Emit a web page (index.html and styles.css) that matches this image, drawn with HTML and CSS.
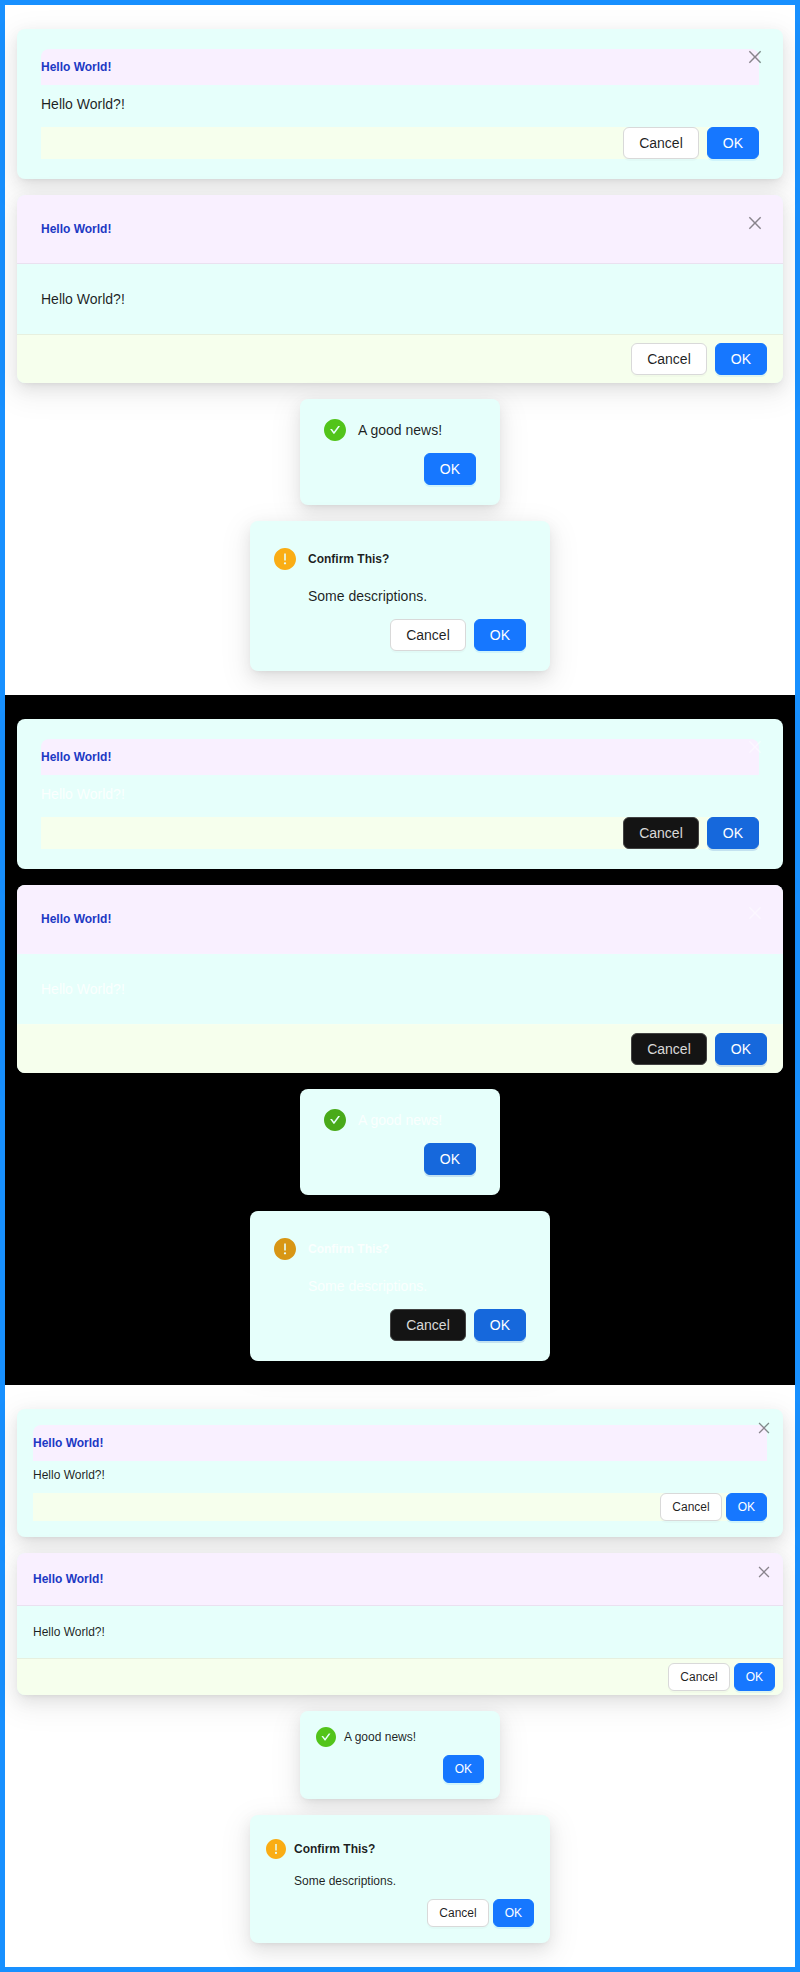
FILE: index.html
```html
<!DOCTYPE html>
<html lang="en">
<head>
<meta charset="utf-8">
<title>Modals</title>
<link rel="stylesheet" href="styles.css">
</head>
<body>
<svg class="sprite" aria-hidden="true">
  <symbol id="close" viewBox="64 64 896 896"><path fill-rule="evenodd" d="M799.86 166.31c.02 0 .04.02.08.06l57.69 57.7c.04.03.05.05.06.08a.12.12 0 010 .06c0 .03-.02.05-.06.09L569.93 512l287.7 287.7c.04.04.05.06.06.09a.12.12 0 010 .07c0 .02-.02.04-.06.08l-57.7 57.69c-.03.04-.05.05-.07.06a.12.12 0 01-.07 0c-.03 0-.05-.02-.09-.06L512 569.93l-287.7 287.7c-.04.04-.06.05-.09.06a.12.12 0 01-.07 0c-.02 0-.04-.02-.08-.06l-57.69-57.7c-.04-.03-.05-.05-.06-.07a.12.12 0 010-.07c0-.03.02-.05.06-.09L454.07 512l-287.7-287.7c-.04-.04-.05-.06-.06-.09a.12.12 0 010-.07c0-.02.02-.04.06-.08l57.7-57.69c.03-.04.05-.05.07-.06a.12.12 0 01.07 0c.03 0 .05.02.09.06L512 454.07l287.7-287.7c.04-.04.06-.05.09-.06a.12.12 0 01.07 0z"/></symbol>
  <symbol id="check" viewBox="64 64 896 896"><path d="M512 64C264.6 64 64 264.6 64 512s200.6 448 448 448 448-200.6 448-448S759.4 64 512 64zm193.5 301.7l-210.6 292a31.8 31.8 0 01-51.7 0L318.5 484.9c-3.8-5.3 0-12.7 6.5-12.7h46.9c10.2 0 19.9 4.9 25.9 13.3l71.2 98.8 157.2-218c6-8.3 15.6-13.3 25.9-13.3H699c6.5 0 10.3 7.4 6.5 12.7z"/></symbol>
  <symbol id="warn" viewBox="64 64 896 896"><path d="M512 64C264.6 64 64 264.6 64 512s200.6 448 448 448 448-200.6 448-448S759.4 64 512 64zm-32 232c0-4.4 3.6-8 8-8h48c4.4 0 8 3.6 8 8v272c0 4.4-3.6 8-8 8h-48c-4.4 0-8-3.6-8-8V296zm32 440a48.01 48.01 0 010-96 48.01 48.01 0 010 96z"/></symbol>
</svg>
<main class="frame">
  <section class="theme">
    <div class="modal">
      <span class="close"><svg><use href="#close"/></svg></span>
      <header class="head"><h5 class="title">Hello World!</h5></header>
      <div class="body">Hello World?!</div>
      <footer class="foot"><button class="btn">Cancel</button><button class="btn primary">OK</button></footer>
    </div>
    <div class="modal divided">
      <span class="close"><svg><use href="#close"/></svg></span>
      <header class="head"><h5 class="title">Hello World!</h5></header>
      <div class="body">Hello World?!</div>
      <footer class="foot"><button class="btn">Cancel</button><button class="btn primary">OK</button></footer>
    </div>
    <div class="modal news">
      <div class="message"><svg class="icon success"><use href="#check"/></svg><div>A good news!</div></div>
      <footer class="actions"><button class="btn primary">OK</button></footer>
    </div>
    <div class="modal confirm">
      <div class="message">
        <svg class="icon warning"><use href="#warn"/></svg>
        <div class="text"><h5 class="title">Confirm This?</h5><div>Some descriptions.</div></div>
      </div>
      <footer class="actions"><button class="btn">Cancel</button><button class="btn primary">OK</button></footer>
    </div>
  </section>

  <section class="theme dark">
    <div class="modal">
      <span class="close"><svg><use href="#close"/></svg></span>
      <header class="head"><h5 class="title">Hello World!</h5></header>
      <div class="body">Hello World?!</div>
      <footer class="foot"><button class="btn">Cancel</button><button class="btn primary">OK</button></footer>
    </div>
    <div class="modal divided">
      <span class="close"><svg><use href="#close"/></svg></span>
      <header class="head"><h5 class="title">Hello World!</h5></header>
      <div class="body">Hello World?!</div>
      <footer class="foot"><button class="btn">Cancel</button><button class="btn primary">OK</button></footer>
    </div>
    <div class="modal news">
      <div class="message"><svg class="icon success"><use href="#check"/></svg><div>A good news!</div></div>
      <footer class="actions"><button class="btn primary">OK</button></footer>
    </div>
    <div class="modal confirm">
      <div class="message">
        <svg class="icon warning"><use href="#warn"/></svg>
        <div class="text"><h5 class="title">Confirm This?</h5><div>Some descriptions.</div></div>
      </div>
      <footer class="actions"><button class="btn">Cancel</button><button class="btn primary">OK</button></footer>
    </div>
  </section>

  <section class="theme compact">
    <div class="modal">
      <span class="close"><svg><use href="#close"/></svg></span>
      <header class="head"><h5 class="title">Hello World!</h5></header>
      <div class="body">Hello World?!</div>
      <footer class="foot"><button class="btn">Cancel</button><button class="btn primary">OK</button></footer>
    </div>
    <div class="modal divided">
      <span class="close"><svg><use href="#close"/></svg></span>
      <header class="head"><h5 class="title">Hello World!</h5></header>
      <div class="body">Hello World?!</div>
      <footer class="foot"><button class="btn">Cancel</button><button class="btn primary">OK</button></footer>
    </div>
    <div class="modal news">
      <div class="message"><svg class="icon success"><use href="#check"/></svg><div>A good news!</div></div>
      <footer class="actions"><button class="btn primary">OK</button></footer>
    </div>
    <div class="modal confirm">
      <div class="message">
        <svg class="icon warning"><use href="#warn"/></svg>
        <div class="text"><h5 class="title">Confirm This?</h5><div>Some descriptions.</div></div>
      </div>
      <footer class="actions"><button class="btn">Cancel</button><button class="btn primary">OK</button></footer>
    </div>
  </section>
</main>
</body>
</html>
```

FILE: styles.css
```css
* { box-sizing: border-box; }
body { margin: 0; font-family: "Liberation Sans", Arial, sans-serif; }
.sprite { display: none; }
.frame { border: 5px solid #1890ff; }

.theme {
  --text: rgba(0, 0, 0, .88);
  --muted: rgba(0, 0, 0, .45);
  --line: rgba(5, 5, 5, .06);
  --success: #52c41a;
  --warning: #faad14;
  --btn-bg: #fff;
  --btn-border: #d9d9d9;
  --btn-shadow: rgba(0, 0, 0, .02);
  --primary: #1677ff;
  --primary-shadow: rgba(5, 145, 255, .1);
  --size: 14px;
  --line-height: 22px;
  --pad-y: 20px;
  --pad-x: 24px;
  --head-gap: 8px;
  --foot-gap: 12px;
  --head-pad: 16px;
  --body-pad: 24px;
  --foot-pad-y: 8px;
  --foot-pad-x: 16px;
  --btn-gap: 8px;
  --btn-height: 32px;
  --btn-pad: 15px;
  --icon: 22px;
  --icon-gap: 12px;
  --close-pos: 17px;
  --close-size: 16px;
  display: flex;
  flex-direction: column;
  align-items: center;
  gap: 16px;
  padding: 24px 12px;
  background: #fff;
  color: var(--text);
  font-size: var(--size);
  line-height: var(--line-height);
}
.dark {
  --text: rgba(255, 255, 255, .85);
  --muted: rgba(255, 255, 255, .45);
  --line: rgba(253, 253, 253, .12);
  --success: #49aa19;
  --warning: #d89614;
  --btn-bg: #141414;
  --btn-border: #424242;
  --btn-shadow: rgba(255, 255, 255, .04);
  --primary: #1668dc;
  --primary-shadow: rgba(0, 60, 180, .15);
  background: #000;
}
.compact {
  --size: 12px;
  --line-height: 20px;
  --pad-y: 16px;
  --pad-x: 16px;
  --head-gap: 4px;
  --foot-gap: 8px;
  --head-pad: 8px;
  --body-pad: 16px;
  --foot-pad-y: 4px;
  --foot-pad-x: 8px;
  --btn-gap: 4px;
  --btn-height: 28px;
  --btn-pad: 11px;
  --icon: 20px;
  --icon-gap: 8px;
  --close-pos: 8px;
  --close-size: 14px;
}

.modal {
  position: relative;
  width: 100%;
  padding: var(--pad-y) var(--pad-x);
  border-radius: 8px;
  background: #e6fffb;
  box-shadow: 0 6px 16px 0 rgba(0, 0, 0, .08), 0 3px 6px -4px rgba(0, 0, 0, .12), 0 9px 28px 8px rgba(0, 0, 0, .05);
}
.news { width: 200px; }
.confirm { width: 300px; }

.close {
  position: absolute;
  top: var(--close-pos);
  right: var(--close-pos);
  display: grid;
  place-items: center;
  width: 22px;
  height: 22px;
}
.close svg { width: var(--close-size); height: var(--close-size); fill: var(--muted); }

.title { margin: 0; font-size: 12px; font-weight: 700; line-height: 36px; }
.head { margin-bottom: var(--head-gap); border-radius: 8px 8px 0 0; background: #f9f0ff; }
.head .title { color: #1d39c4; }
.foot, .actions { display: flex; justify-content: flex-end; gap: var(--btn-gap); margin-top: var(--foot-gap); }
.foot { background: #f6ffed; }

.divided { padding: 0; }
.divided .head { margin: 0; padding: var(--head-pad) var(--pad-x); border-bottom: 1px solid var(--line); }
.divided .body { padding: var(--body-pad) var(--pad-x); }
.divided .foot { margin: 0; padding: var(--foot-pad-y) var(--foot-pad-x); border-top: 1px solid var(--line); border-radius: 0 0 8px 8px; }

.message { display: flex; gap: var(--icon-gap); }
.icon { flex: none; width: var(--icon); height: var(--icon); }
.success { fill: var(--success); }
.warning { fill: var(--warning); }
.confirm .icon { margin-top: calc((36px - var(--icon)) / 2); }
.text { display: flex; flex-direction: column; gap: var(--head-gap); }

.btn {
  height: var(--btn-height);
  padding: 0 var(--btn-pad);
  border: 1px solid var(--btn-border);
  border-radius: 6px;
  background: var(--btn-bg);
  box-shadow: 0 2px 0 var(--btn-shadow);
  color: var(--text);
  font: inherit;
}
.primary { border-color: var(--primary); background: var(--primary); box-shadow: 0 2px 0 var(--primary-shadow); color: #fff; }
```
